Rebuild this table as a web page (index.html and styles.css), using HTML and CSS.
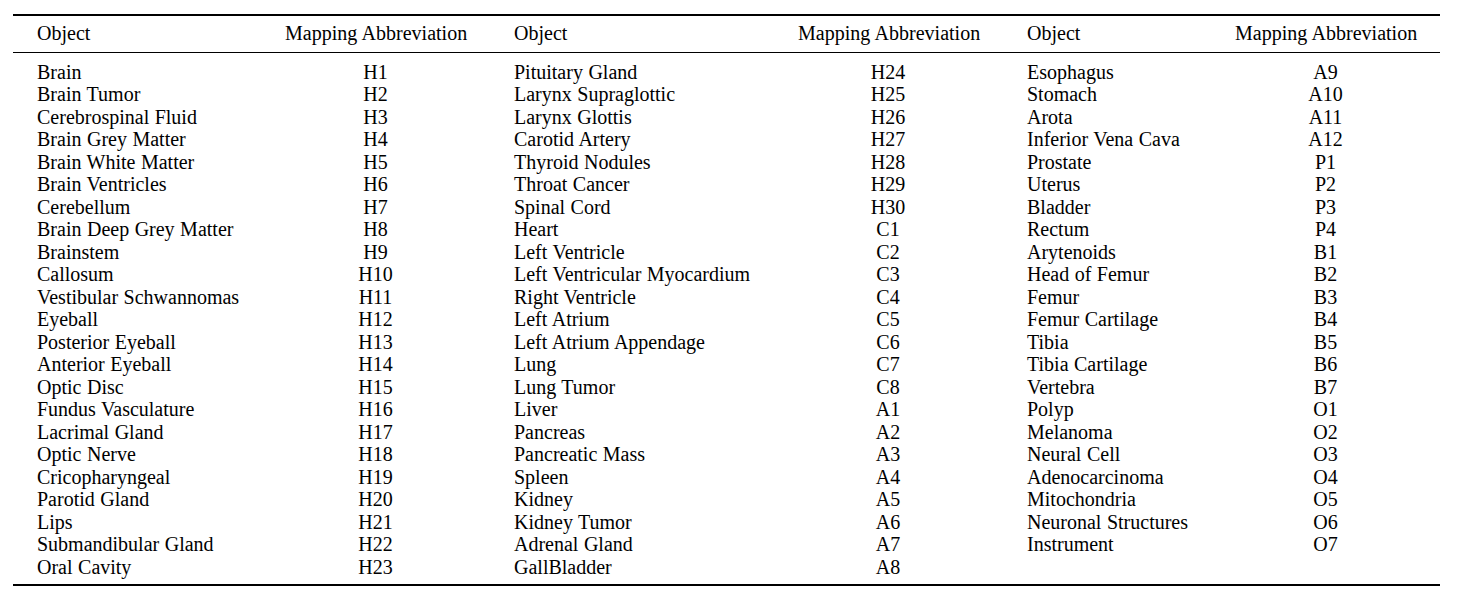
FILE: index.html
```html
<!DOCTYPE html>
<html>
<head>
<meta charset="utf-8">
<link rel="stylesheet" href="styles.css">
</head>
<body>
<div class="tbl">
  <div class="row head">
    <div class="c obj first">Object</div><div class="c abbr">Mapping Abbreviation</div>
    <div class="c obj mid">Object</div><div class="c abbr">Mapping Abbreviation</div>
    <div class="c obj last">Object</div><div class="c abbr end">Mapping Abbreviation</div>
  </div>
  <div class="row body">
    <div class="c obj first">Brain</div><div class="c abbr">H1</div><div class="c obj mid">Pituitary Gland</div><div class="c abbr">H24</div><div class="c obj last">Esophagus</div><div class="c abbr end">A9</div>
    <div class="c obj first">Brain Tumor</div><div class="c abbr">H2</div><div class="c obj mid">Larynx Supraglottic</div><div class="c abbr">H25</div><div class="c obj last">Stomach</div><div class="c abbr end">A10</div>
    <div class="c obj first">Cerebrospinal Fluid</div><div class="c abbr">H3</div><div class="c obj mid">Larynx Glottis</div><div class="c abbr">H26</div><div class="c obj last">Arota</div><div class="c abbr end">A11</div>
    <div class="c obj first">Brain Grey Matter</div><div class="c abbr">H4</div><div class="c obj mid">Carotid Artery</div><div class="c abbr">H27</div><div class="c obj last">Inferior Vena Cava</div><div class="c abbr end">A12</div>
    <div class="c obj first">Brain White Matter</div><div class="c abbr">H5</div><div class="c obj mid">Thyroid Nodules</div><div class="c abbr">H28</div><div class="c obj last">Prostate</div><div class="c abbr end">P1</div>
    <div class="c obj first">Brain Ventricles</div><div class="c abbr">H6</div><div class="c obj mid">Throat Cancer</div><div class="c abbr">H29</div><div class="c obj last">Uterus</div><div class="c abbr end">P2</div>
    <div class="c obj first">Cerebellum</div><div class="c abbr">H7</div><div class="c obj mid">Spinal Cord</div><div class="c abbr">H30</div><div class="c obj last">Bladder</div><div class="c abbr end">P3</div>
    <div class="c obj first">Brain Deep Grey Matter</div><div class="c abbr">H8</div><div class="c obj mid">Heart</div><div class="c abbr">C1</div><div class="c obj last">Rectum</div><div class="c abbr end">P4</div>
    <div class="c obj first">Brainstem</div><div class="c abbr">H9</div><div class="c obj mid">Left Ventricle</div><div class="c abbr">C2</div><div class="c obj last">Arytenoids</div><div class="c abbr end">B1</div>
    <div class="c obj first">Callosum</div><div class="c abbr">H10</div><div class="c obj mid">Left Ventricular Myocardium</div><div class="c abbr">C3</div><div class="c obj last">Head of Femur</div><div class="c abbr end">B2</div>
    <div class="c obj first">Vestibular Schwannomas</div><div class="c abbr">H11</div><div class="c obj mid">Right Ventricle</div><div class="c abbr">C4</div><div class="c obj last">Femur</div><div class="c abbr end">B3</div>
    <div class="c obj first">Eyeball</div><div class="c abbr">H12</div><div class="c obj mid">Left Atrium</div><div class="c abbr">C5</div><div class="c obj last">Femur Cartilage</div><div class="c abbr end">B4</div>
    <div class="c obj first">Posterior Eyeball</div><div class="c abbr">H13</div><div class="c obj mid">Left Atrium Appendage</div><div class="c abbr">C6</div><div class="c obj last">Tibia</div><div class="c abbr end">B5</div>
    <div class="c obj first">Anterior Eyeball</div><div class="c abbr">H14</div><div class="c obj mid">Lung</div><div class="c abbr">C7</div><div class="c obj last">Tibia Cartilage</div><div class="c abbr end">B6</div>
    <div class="c obj first">Optic Disc</div><div class="c abbr">H15</div><div class="c obj mid">Lung Tumor</div><div class="c abbr">C8</div><div class="c obj last">Vertebra</div><div class="c abbr end">B7</div>
    <div class="c obj first">Fundus Vasculature</div><div class="c abbr">H16</div><div class="c obj mid">Liver</div><div class="c abbr">A1</div><div class="c obj last">Polyp</div><div class="c abbr end">O1</div>
    <div class="c obj first">Lacrimal Gland</div><div class="c abbr">H17</div><div class="c obj mid">Pancreas</div><div class="c abbr">A2</div><div class="c obj last">Melanoma</div><div class="c abbr end">O2</div>
    <div class="c obj first">Optic Nerve</div><div class="c abbr">H18</div><div class="c obj mid">Pancreatic Mass</div><div class="c abbr">A3</div><div class="c obj last">Neural Cell</div><div class="c abbr end">O3</div>
    <div class="c obj first">Cricopharyngeal</div><div class="c abbr">H19</div><div class="c obj mid">Spleen</div><div class="c abbr">A4</div><div class="c obj last">Adenocarcinoma</div><div class="c abbr end">O4</div>
    <div class="c obj first">Parotid Gland</div><div class="c abbr">H20</div><div class="c obj mid">Kidney</div><div class="c abbr">A5</div><div class="c obj last">Mitochondria</div><div class="c abbr end">O5</div>
    <div class="c obj first">Lips</div><div class="c abbr">H21</div><div class="c obj mid">Kidney Tumor</div><div class="c abbr">A6</div><div class="c obj last">Neuronal Structures</div><div class="c abbr end">O6</div>
    <div class="c obj first">Submandibular Gland</div><div class="c abbr">H22</div><div class="c obj mid">Adrenal Gland</div><div class="c abbr">A7</div><div class="c obj last">Instrument</div><div class="c abbr end">O7</div>
    <div class="c obj first">Oral Cavity</div><div class="c abbr">H23</div><div class="c obj mid">GallBladder</div><div class="c abbr">A8</div><div class="c obj last"></div><div class="c abbr end"></div>
  </div>
</div>
</body>
</html>
```
FILE: styles.css
```css
html, body {
  margin: 0;
  padding: 0;
  background: #ffffff;
}
body {
  padding-top: 14px;
  font-family: "Liberation Serif", "Times New Roman", serif;
  font-size: 20px;
  line-height: 22.5px;
  color: #000000;
  word-spacing: 0.5px;
}
.tbl {
  margin-left: 13px;
  width: 1427px;
  border-top: 2px solid #000;
  border-bottom: 2px solid #000;
}
.row {
  display: grid;
  grid-template-columns: 272px 181px 332px 180px 257px 205px;
}
.head {
  padding-top: 6px;
  padding-bottom: 7.5px;
  border-bottom: 1px solid #000;
}
.body {
  padding-top: 7.5px;
  padding-bottom: 6.2px;
}
.c {
  white-space: nowrap;
  height: 22.5px;
}
.obj { text-align: left; }
.first { padding-left: 24px; }
.mid { padding-left: 48px; }
.last { padding-left: 49px; }
.abbr { text-align: center; }
.end { padding-right: 24px; }
```
